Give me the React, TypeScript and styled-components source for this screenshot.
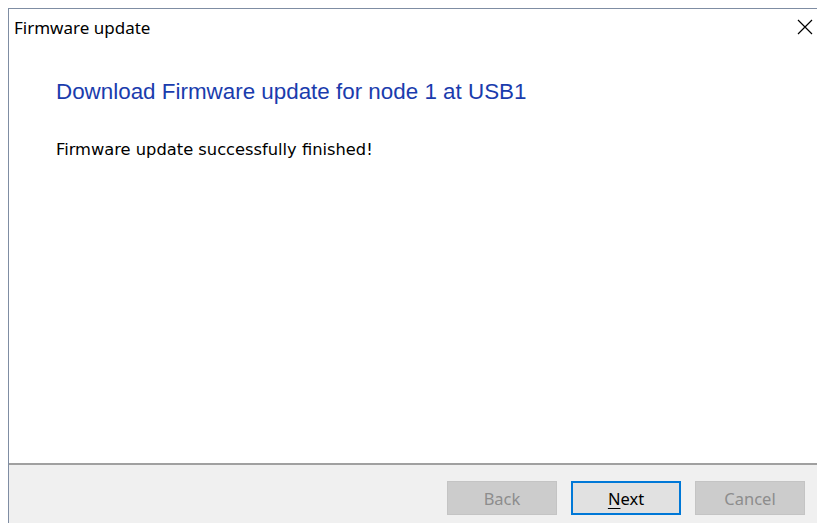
import React from "react";
import styled, { createGlobalStyle } from "styled-components";

const Global = createGlobalStyle`
  html, body {
    margin: 0;
    padding: 0;
    background: #ffffff;
    overflow: hidden;
  }
  body {
    font-family: "Noto Sans", "Liberation Sans", sans-serif;
  }
`;

const Page = styled.div`
  width: 817px;
  height: 523px;
  padding: 8px 0 0 8px;
  box-sizing: border-box;
  background: #ffffff;
  overflow: hidden;
`;

/* the dialog runs past the bottom and right edges of the viewport */
const Window = styled.div`
  width: 809px;
  height: 531px;
  border-left: 1px solid #7f8da3;
  border-top: 1px solid #7f8da3;
  display: flex;
  flex-direction: column;
  background: #ffffff;
  box-sizing: border-box;
`;

const TitleBar = styled.div`
  height: 36px;
  display: flex;
  align-items: center;
  justify-content: space-between;
  padding: 0 0 0 5px;
`;

const Title = styled.span`
  font-family: "Noto Sans", "Liberation Sans", sans-serif;
  font-size: 17px;
  color: #000000;
`;

const CloseButton = styled.button`
  width: 24px;
  height: 24px;
  border: none;
  background: transparent;
  display: flex;
  align-items: center;
  justify-content: center;
  padding: 0;
`;

const Body = styled.div`
  flex: 1;
  padding: 33px 0 0 47px;
  display: flex;
  flex-direction: column;
`;

const Heading = styled.h1`
  margin: 0;
  font-family: "Liberation Sans", Arial, sans-serif;
  font-weight: normal;
  font-size: 22.4px;
  color: #1a3cad;
  line-height: 28px;
`;

const Message = styled.p`
  margin: 34px 0 0 0;
  font-family: "DejaVu Sans", "Liberation Sans", sans-serif;
  font-size: 16.3px;
  color: #000000;
  line-height: 20px;
`;

const Footer = styled.div`
  height: 58px;
  background: #f0f0f0;
  border-top: 2px solid #a0a0a0;
  display: flex;
  justify-content: flex-end;
  align-items: flex-start;
  gap: 14px;
  padding: 16px 12px 0 0;
  box-sizing: content-box;
`;

const Button = styled.button<{ $primary?: boolean }>`
  width: 110px;
  height: 34px;
  box-sizing: border-box;
  font-family: "Noto Sans", "Liberation Sans", sans-serif;
  font-size: 16.5px;
  background: ${(p) => (p.$primary ? "#e1e1e1" : "#cccccc")};
  color: ${(p) => (p.$primary ? "#000000" : "#8d8d8d")};
  border: ${(p) => (p.$primary ? "2px solid #0078d7" : "1px solid #c4c4c4")};
  padding: 0;
  display: flex;
  align-items: center;
  justify-content: center;
`;

const Mnemonic = styled.span`
  text-decoration: underline;
  text-underline-offset: 3px;
`;

export default function App() {
  return (
    <>
      <Global />
      <Page>
        <Window>
          <TitleBar>
            <Title>Firmware update</Title>
            <CloseButton aria-label="Close">
              <svg width="16" height="16" viewBox="0 0 16 16">
                <path d="M1 1 L15 15 M15 1 L1 15" stroke="#000" strokeWidth="1.2" fill="none" />
              </svg>
            </CloseButton>
          </TitleBar>
          <Body>
            <Heading>Download Firmware update for node 1 at USB1</Heading>
            <Message>Firmware update successfully finished!</Message>
          </Body>
          <Footer>
            <Button disabled>Back</Button>
            <Button $primary>
              <Mnemonic>N</Mnemonic>ext
            </Button>
            <Button disabled>Cancel</Button>
          </Footer>
        </Window>
      </Page>
    </>
  );
}
